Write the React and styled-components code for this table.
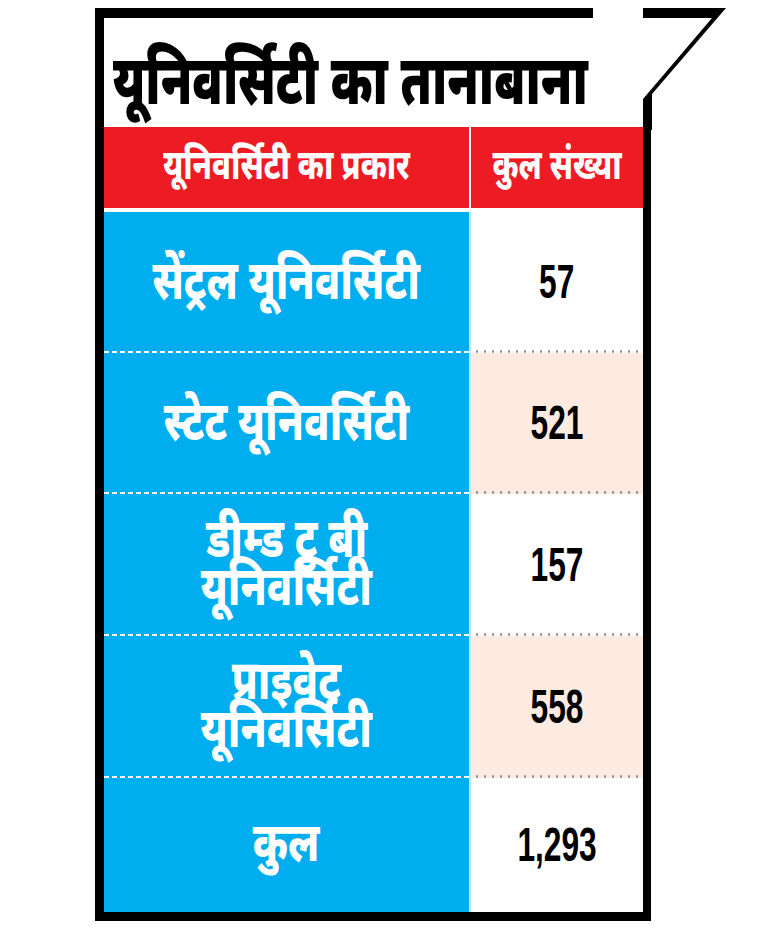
import React from "react";
import styled, { createGlobalStyle } from "styled-components";

const Global = createGlobalStyle`
  html, body { margin: 0; padding: 0; background: #fff; }
  body { font-family: "Noto Sans Devanagari", "Noto Sans", sans-serif; }
`;

const Page = styled.div`
  width: 770px;
  height: 931px;
  padding-top: 8px;
  box-sizing: border-box;
  background: #fff;
`;

const Frame = styled.div`
  position: relative;
  margin-left: 95px;
  width: 556px;
  box-sizing: border-box;
  border-left: 9px solid #000;
  border-bottom: 9px solid #000;
`;

const TopRule = styled.div`
  width: 489px;
  height: 10px;
  background: #000;
`;

const Corner = styled.svg`
  position: absolute;
  left: 539px;
  top: 0;
  width: 84px;
  height: 122px;
  display: block;
`;

const TitleBar = styled.div`
  height: 109px;
  box-sizing: border-box;
  display: flex;
  align-items: center;
  padding: 30px 0 0 9px;
`;

const Title = styled.h1`
  margin: 0;
  font-family: "Noto Sans Devanagari", "Noto Sans", sans-serif;
  font-weight: 900;
  font-size: 69px;
  line-height: 1;
  color: #000;
  white-space: nowrap;
  display: inline-block;
  transform-origin: left center;
  transform: scaleX(${(p) => p.$sx});
`;

const Table = styled.div`
  border-right: 8px solid #000;
  display: flex;
  flex-direction: column;
`;

const HeadRow = styled.div`
  display: grid;
  grid-template-columns: 365px 172px;
  column-gap: 2px;
  height: 81px;
  margin-bottom: 4px;
  background: #fff;
`;

const HeadCell = styled.div`
  background: #ed1c24;
  color: #fff;
  display: flex;
  align-items: center;
  justify-content: center;
  font-weight: 800;
  font-size: 41px;
  padding-top: 2px;
`;

const Squeeze = styled.span`
  display: inline-block;
  white-space: nowrap;
  transform: scaleX(${(p) => p.$sx});
`;

const Row = styled.div`
  display: grid;
  grid-template-columns: 365px 172px;
  column-gap: 2px;
  height: ${(p) => p.$h}px;
  background: #bfe8fa;
`;

const NameCell = styled.div`
  background-color: #00aeef;
  background-image: ${(p) =>
    p.$rule
      ? "repeating-linear-gradient(to right, #fff 0 5px, transparent 5px 8px)"
      : "none"};
  background-size: 100% 2px;
  background-repeat: no-repeat;
  background-position: 0 100%;
  color: #fff;
  display: flex;
  flex-direction: column;
  align-items: center;
  justify-content: center;
  font-weight: 800;
  font-size: 55px;
  line-height: 48px;
  padding-top: 6px;
`;

const CountCell = styled.div`
  background-color: ${(p) => (p.$tint ? "#fdebe2" : "#fff")};
  background-image: ${(p) =>
    p.$rule ? "radial-gradient(circle, #8c8c8c 1px, transparent 1.4px)" : "none"};
  background-size: 8px 3px;
  background-repeat: repeat-x;
  background-position: 2px 100%;
  display: flex;
  align-items: center;
  justify-content: center;
  padding-bottom: 2px;
`;

const Count = styled.span`
  display: inline-block;
  font-family: "Liberation Sans", Arial, sans-serif;
  font-weight: 700;
  font-size: 48px;
  color: #000;
  transform: scaleX(0.66);
`;

const rows = [
  { name: ["सेंट्रल यूनिवर्सिटी"], count: "57", tint: false, h: 141 },
  { name: ["स्टेट यूनिवर्सिटी"], count: "521", tint: true, h: 141 },
  { name: ["डीम्ड टु बी", "यूनिवर्सिटी"], count: "157", tint: false, h: 142 },
  { name: ["प्राइवेट", "यूनिवर्सिटी"], count: "558", tint: true, h: 142 },
  { name: ["कुल"], count: "1,293", tint: false, h: 134 },
];

export default function App() {
  return (
    <>
      <Global />
      <Page>
        <Frame>
          <TopRule />
          <Corner viewBox="0 0 84 122">
            <polygon points="0,0 83,0 9,86 9,122 0,122 0,91 69,10 0,10" fill="#000" />
          </Corner>
          <TitleBar>
            <Title $sx={0.7}>यूनिवर्सिटी का तानाबाना</Title>
          </TitleBar>
          <Table>
            <HeadRow>
              <HeadCell>
                <Squeeze $sx={0.75}>यूनिवर्सिटी का प्रकार</Squeeze>
              </HeadCell>
              <HeadCell>
                <Squeeze $sx={0.75}>कुल संख्या</Squeeze>
              </HeadCell>
            </HeadRow>
            {rows.map((r, i) => {
              const rule = i < rows.length - 1;
              return (
                <Row key={i} $h={r.h}>
                  <NameCell $rule={rule}>
                    {r.name.map((line, j) => (
                      <Squeeze key={j} $sx={0.755}>
                        {line}
                      </Squeeze>
                    ))}
                  </NameCell>
                  <CountCell $rule={rule} $tint={r.tint}>
                    <Count>{r.count}</Count>
                  </CountCell>
                </Row>
              );
            })}
          </Table>
        </Frame>
      </Page>
    </>
  );
}
